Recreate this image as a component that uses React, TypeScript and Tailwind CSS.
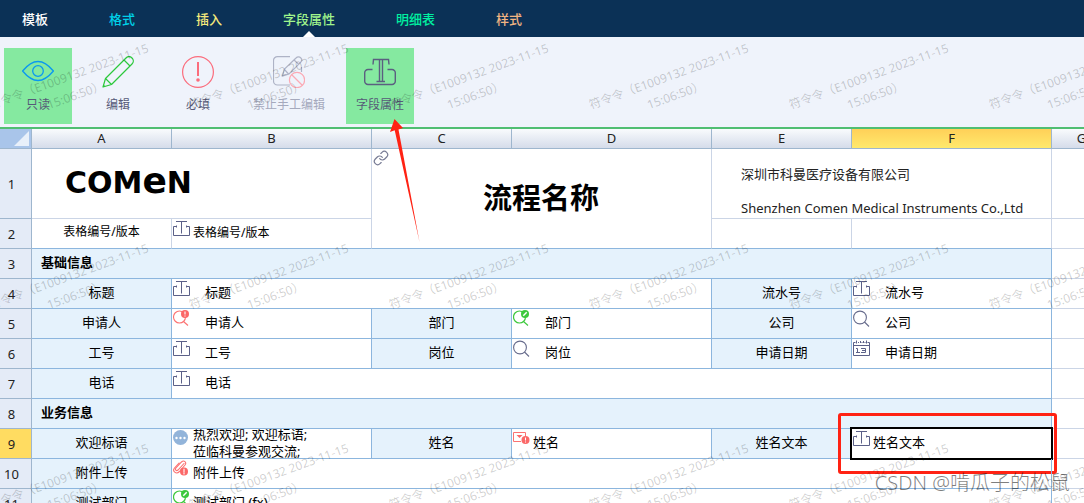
import React from "react";
import { Link } from "lucide-react";

type IconName = "text" | "search" | "searchRequired" | "searchEdit" | "calendar" | "more" | "clip" | "select";

const tabs = [
  { label: "模板", color: "text-white" },
  { label: "格式", color: "text-[#00d0e8]" },
  { label: "插入", color: "text-[#f4ea7c]" },
  { label: "字段属性", color: "text-[#a0f58c]", active: true },
  { label: "明细表", color: "text-[#00f0a0]" },
  { label: "样式", color: "text-[#f0b482]" },
];

function EyeIcon() {
  return (
    <svg viewBox="0 0 32 32" className="h-8 w-8" fill="none" stroke="#0a98f0" strokeWidth="1.3">
      <path d="M.6 15C6 8.500 11 5.500 16 5.500S26 8.500 31.400 15C26 21.500 21 24.500 16 24.500S6 21.500.6 15Z" />
      <circle cx="16" cy="15" r="5.300" />
    </svg>
  );
}

function PencilIcon() {
  return (
    <svg viewBox="0 0 32 32" className="h-8 w-8" fill="none" stroke="#2cc83c" strokeWidth="1.2" strokeLinejoin="round">
      <path d="M1 31l2.500-8.500L24 2c2-2 4.500-1.500 6 0s2 4 0 6L9.500 28.500Z" />
      <path d="M3.500 22.500l6 6M22 4l6 6M1.500 29.500l1.500 1" />
    </svg>
  );
}

function RequiredIcon() {
  return (
    <svg viewBox="0 0 32 32" className="h-8 w-8" fill="none" stroke="#fb6c7c">
      <circle cx="16" cy="16" r="15.400" strokeWidth="1.200" />
      <path d="M16 6v14" strokeWidth="2" />
      <circle cx="16" cy="24" r="1.800" fill="#fb6c7c" stroke="none" />
    </svg>
  );
}

function NoEditIcon() {
  return (
    <svg viewBox="0 0 32 32" className="h-8 w-8" fill="none" stroke="#aeb3c6" strokeWidth="1.200">
      <path d="M17 .6H4.500a4 4 0 0 0-4 4V25a4 4 0 0 0 4 4H17M28.500 11v5" />
      <path d="M9.500 20l2-7L23 2c1.500-1.500 3.500-1.500 4.800-.2s1.300 3-.2 4.500L16 18ZM11.500 13.500l4 4.500M21 4l5 4.500" />
      <circle cx="24" cy="24" r="7.600" stroke="#fba9b4" />
      <path d="M18.500 18.500l11 11" stroke="#fba9b4" />
    </svg>
  );
}

function FieldIcon() {
  return (
    <svg viewBox="0 0 32 32" className="h-8 w-8" fill="none" stroke="#5b5f80" strokeWidth="1.400">
      <path d="M8.500 13.500H4a3.300 3.300 0 0 0-3.300 3.300v8.400A3.300 3.300 0 0 0 4 28.500h24a3.300 3.300 0 0 0 3.300-3.300v-8.400a3.300 3.300 0 0 0-3.300-3.300h-4.500" />
      <path d="M9 8.500l.5-5h15l.5 5M15.500 3.500v22M18.500 3.500v22M12.500 25.500h8.500" />
    </svg>
  );
}

const tools = [
  { label: "只读", icon: <EyeIcon />, box: "w-[68px] bg-[#85e9a0]" },
  { label: "编辑", icon: <PencilIcon />, box: "w-[68px]" },
  { label: "必填", icon: <RequiredIcon />, box: "w-[68px]" },
  { label: "禁止手工编辑", icon: <NoEditIcon />, box: "w-[90px] text-[#a5a9bd]", disabled: true },
  { label: "字段属性", icon: <FieldIcon />, box: "w-[68px] bg-[#85e9a0]" },
];

function CellIcon({ name }: { name: IconName }) {
  const common = { viewBox: "0 0 17 17", className: "mt-px ml-px h-[17px] w-[17px] shrink-0", fill: "none" };
  switch (name) {
    case "text":
      return (
        <svg {...common} stroke="#5b6088">
          <path d="M3 1.500h11M8.500 1.500v12M3.500 6.500h-3v9h16v-9h-3M3.500 5.500v2M13.500 5.500v2" />
        </svg>
      );
    case "search":
      return (
        <svg {...common} stroke="#666b8c" strokeWidth="1.100">
          <circle cx="7" cy="7.500" r="6.400" />
          <path d="M11.500 12l4.500 4.500" />
        </svg>
      );
    case "searchRequired":
      return (
        <svg {...common} stroke="#fb7272" strokeWidth="1.100">
          <circle cx="6.500" cy="7" r="6" />
          <path d="M10.500 11.500l4.500 4" />
          <circle cx="12" cy="4" r="4" fill="#fb6868" stroke="none" />
          <path d="M12 1.500v3M12 5.500v1" stroke="#fff" />
        </svg>
      );
    case "searchEdit":
      return (
        <svg {...common} stroke="#3cc83c" strokeWidth="1.200">
          <circle cx="6.500" cy="7" r="6" />
          <path d="M10.500 11.500l4.500 4" />
          <circle cx="12" cy="4" r="4" fill="#3cc83c" stroke="none" />
          <path d="M10.300 5.800l3.400-3.600" stroke="#fff" strokeWidth="1.400" />
        </svg>
      );
    case "calendar":
      return (
        <svg {...common} stroke="#5b6088">
          <path d="M2.500 2.500h-2v13h16v-13h-2M.5 5.500h16M3.500.5v3M13.500.5v3M7.500 1v2M10.500 1v2M5 2.500h1M8.500 2.500h1M11.500 2.500h1" />
          <path d="M3 8.500h1.500v4M3 12.500h4M8 8.500h4.500v4H8M9 10.500h3.500" />
        </svg>
      );
    case "more":
      return (
        <svg {...common}>
          <circle cx="7.500" cy="7.500" r="7.500" fill="#92b4da" />
          <circle cx="3.500" cy="8" r="1.200" fill="#fff" />
          <circle cx="7.500" cy="8" r="1.200" fill="#fff" />
          <circle cx="11.500" cy="8" r="1.200" fill="#fff" />
        </svg>
      );
    case "clip":
      return (
        <svg {...common} stroke="#fb7272" strokeWidth="1.100" strokeLinecap="round">
          <path d="M11 3.500L5 10c-1.500 1.500-3.500-.3-2-2L8.500 2c2.500-2.500 5.500.5 3.500 3L6.500 11.500C3 15-1 11 1.500 8L6 3" />
          <circle cx="11" cy="11.500" r="4" fill="#fb6868" stroke="none" />
          <path d="M11 9v3M11 13v1" stroke="#fff" />
        </svg>
      );
    case "select":
      return (
        <svg {...common} stroke="#fb7272">
          <path d="M8 11.500H.5v-9h12V7" />
          <path d="M3.500 5h6l-3 3Z" fill="#fb6868" stroke="none" />
          <circle cx="12.500" cy="10" r="4" fill="#fb6868" stroke="none" />
          <path d="M12.500 7.500v3M12.500 11.500v1" stroke="#fff" />
        </svg>
      );
  }
}

const line = "border-[#8cb6de]";
const paleLine = "border-[#cbd5e6]";

function RowHead({ n, current }: { n: number; current?: boolean }) {
  return (
    <th
      scope="row"
      className={`border-r border-b border-[#9eb6ce] p-0 pr-2 text-center font-normal text-[#222] ${
        current ? "bg-[#ffdc61]" : "bg-[#e4ebf7]"
      }`}
    >
      {n}
    </th>
  );
}

function Label({ children, pale }: { children?: React.ReactNode; pale?: boolean }) {
  return (
    <td
      className={`border-r border-b p-0 pb-1 text-center ${
        pale ? "border-r-[#cbd5e6] border-b-[#8cb6de] text-xs leading-5" : `${line} bg-[#e5f2fc]`
      }`}
    >
      {children}
    </td>
  );
}

function Field({
  icon,
  children,
  span = 1,
  near,
  pale,
  selected,
}: {
  icon: IconName;
  children: React.ReactNode;
  span?: number;
  near?: boolean;
  pale?: boolean;
  selected?: boolean;
}) {
  return (
    <td
      colSpan={span}
      className={`relative border-r border-b p-0 ${pale ? "border-r-[#cbd5e6] border-b-[#8cb6de] text-xs" : line}`}
    >
      <div className="flex h-[29px] items-start overflow-hidden">
        <CellIcon name={icon} />
        <span className={`self-center pb-0.5 leading-[17px] ${near ? "ml-[3px]" : "ml-[15px]"}`}>{children}</span>
      </div>
      {selected && (
        <>
          <div className="pointer-events-none absolute -inset-0.5 border-2 border-black" />
          <div className="pointer-events-none absolute -top-4 -right-1.5 -bottom-4 -left-3.5 rounded-[3px] border-3 border-[#ff2213]" />
        </>
      )}
    </td>
  );
}

function Section({ children }: { children: React.ReactNode }) {
  return (
    <td colSpan={6} className={`border-r border-b ${line} bg-[#e5f2fc] p-0 pb-1 pl-[9px] font-bold`}>
      {children}
    </td>
  );
}

function Blank() {
  return <td className={`border-r border-b p-0 ${paleLine}`} />;
}

function Sheet() {
  return (
    <table className="w-[1112px] table-fixed border-separate border-spacing-0 text-[13px] leading-5 text-black">
      <colgroup>
        <col className="w-8" />
        <col className="w-[140px]" />
        <col className="w-[200px]" />
        <col className="w-[140px]" />
        <col className="w-[200px]" />
        <col className="w-[140px]" />
        <col className="w-[200px]" />
        <col className="w-[60px]" />
      </colgroup>
      <thead>
        <tr className="h-5">
          <th className="border-r border-b border-[#9eb6ce] bg-[#a9c5ea] p-0" aria-label="全选">
            <svg viewBox="0 0 31 19" className="block h-[19px] w-[31px]">
              <path d="M29 2v15H14Z" fill="#e8f0fa" />
            </svg>
          </th>
          {["A", "B", "C", "D", "E", "F", "G"].map((c) => (
            <th
              key={c}
              scope="col"
              className={`border-r border-b border-[#9eb6ce] bg-linear-to-b p-0 leading-[19px] font-normal text-[#222] ${
                c === "F" ? "from-[#ffd058] to-[#ffe96c]" : "from-[#f9fbfd] to-[#d5dcea]"
              }`}
            >
              {c}
            </th>
          ))}
        </tr>
      </thead>
      <tbody>
        <tr className="h-[70px]">
          <RowHead n={1} />
          <td colSpan={2} className={`border-r border-b p-0 pb-1 pl-[33px] ${paleLine}`}>
            <span className="font-['DejaVu_Sans',sans-serif] text-[30px] leading-10 font-bold">
              COM<span className="text-[36px]">e</span>N
            </span>
          </td>
          <td colSpan={2} rowSpan={2} className="border-r border-b border-r-[#cbd5e6] border-b-[#8cb6de] p-0">
            <div className="flex h-[99px] items-start">
              <Link className="mt-px ml-px h-4 w-4 shrink-0 text-[#777b94]" strokeWidth={1.8} />
              <h1 className="grow self-center pr-[18px] pb-0.5 text-center text-[29px] leading-10 font-bold">流程名称</h1>
            </div>
          </td>
          <td colSpan={2} className={`border-r border-b p-0 ${paleLine}`}>
            <div className="flex h-[69px] flex-col justify-end gap-[14px] pl-[29px] whitespace-nowrap text-[#222]">
              <p>深圳市科曼医疗设备有限公司</p>
              <p>Shenzhen Comen Medical Instruments Co.,Ltd</p>
            </div>
          </td>
          <Blank />
        </tr>
        <tr className="h-[30px]">
          <RowHead n={2} />
          <Label pale>表格编号/版本</Label>
          <Field icon="text" near pale>表格编号/版本</Field>
          <Label pale />
          <Label pale />
          <Blank />
        </tr>
        <tr className="h-[30px]">
          <RowHead n={3} />
          <Section>基础信息</Section>
          <Blank />
        </tr>
        <tr className="h-[30px]">
          <RowHead n={4} />
          <Label>标题</Label>
          <Field icon="text" span={3}>标题</Field>
          <Label>流水号</Label>
          <Field icon="text">流水号</Field>
          <Blank />
        </tr>
        <tr className="h-[30px]">
          <RowHead n={5} />
          <Label>申请人</Label>
          <Field icon="searchRequired">申请人</Field>
          <Label>部门</Label>
          <Field icon="searchEdit">部门</Field>
          <Label>公司</Label>
          <Field icon="search">公司</Field>
          <Blank />
        </tr>
        <tr className="h-[30px]">
          <RowHead n={6} />
          <Label>工号</Label>
          <Field icon="text">工号</Field>
          <Label>岗位</Label>
          <Field icon="search">岗位</Field>
          <Label>申请日期</Label>
          <Field icon="calendar">申请日期</Field>
          <Blank />
        </tr>
        <tr className="h-[30px]">
          <RowHead n={7} />
          <Label>电话</Label>
          <Field icon="text" span={5}>电话</Field>
          <Blank />
        </tr>
        <tr className="h-[30px]">
          <RowHead n={8} />
          <Section>业务信息</Section>
          <Blank />
        </tr>
        <tr className="h-[30px]">
          <RowHead n={9} current />
          <Label>欢迎标语</Label>
          <Field icon="more" near>
            热烈欢迎; 欢迎标语;
            <br />
            莅临科曼参观交流;
          </Field>
          <Label>姓名</Label>
          <Field icon="select" near>姓名</Field>
          <Label>姓名文本</Label>
          <Field icon="text" near selected>姓名文本</Field>
          <Blank />
        </tr>
        <tr className="h-[30px]">
          <RowHead n={10} />
          <Label>附件上传</Label>
          <Field icon="clip" span={5} near>附件上传</Field>
          <Blank />
        </tr>
        <tr className="h-[30px]">
          <RowHead n={11} />
          <Label>测试部门</Label>
          <Field icon="searchEdit" span={5} near>测试部门 (fx)</Field>
          <Blank />
        </tr>
      </tbody>
    </table>
  );
}

function Watermarks() {
  return (
    <div className="pointer-events-none absolute -top-[14px] -left-7 grid grid-cols-[repeat(6,200px)] auto-rows-[200px]">
      {Array.from({ length: 18 }, (_, i) => (
        <div key={i} className="flex items-center justify-center">
          <p className="-rotate-20 text-center text-xs leading-5 whitespace-nowrap text-black/20">
            符令令（E1009132 2023-11-15
            <br />
            15:06:50）
          </p>
        </div>
      ))}
    </div>
  );
}

export default function App() {
  return (
    <div className="relative flex h-screen flex-col overflow-hidden bg-white font-['Noto_Sans','Noto_Sans_CJK_SC',sans-serif]">
      <nav className="relative z-10 flex h-[37px] shrink-0 gap-[61px] bg-[#0b3156] pl-[22px]">
        {tabs.map((t) => (
          <button key={t.label} type="button" className={`relative text-[13px] leading-5 font-medium ${t.color}`}>
            {t.label}
            {t.active && (
              <svg viewBox="0 0 12 6" className="absolute bottom-0 left-1/2 h-1.5 w-3 -translate-x-1/2">
                <path d="M0 6L6 0l6 6Z" fill="#fff" />
              </svg>
            )}
          </button>
        ))}
      </nav>
      <div className="flex h-[92px] shrink-0 gap-3 border-b-2 border-[#50be72] bg-[#eff3fb] pt-[11px] pl-1">
        {tools.map((t) => (
          <button
            key={t.label}
            type="button"
            disabled={t.disabled}
            className={`flex h-[76px] shrink-0 flex-col items-center gap-[7px] pt-2 text-xs leading-5 whitespace-nowrap ${
              t.disabled ? "" : "text-[#565a78]"
            } ${t.box}`}
          >
            {t.icon}
            <span className="leading-5">{t.label}</span>
          </button>
        ))}
      </div>
      <main className="min-h-0 grow overflow-hidden">
        <Sheet />
      </main>
      <Watermarks />
      <svg viewBox="0 0 30 124" className="pointer-events-none absolute top-[119px] left-[390px] h-[124px] w-[30px]">
        <path d="M4.500 0L13 9l-4.500 1.500L29.500 123 4.700 11.200 0 13Z" fill="#ff2213" />
      </svg>
      <p className="pointer-events-none absolute right-[14px] bottom-[5px] text-[20px] leading-[30px] font-light whitespace-nowrap text-black/50">
        CSDN @啃瓜子的松鼠
      </p>
    </div>
  );
}
